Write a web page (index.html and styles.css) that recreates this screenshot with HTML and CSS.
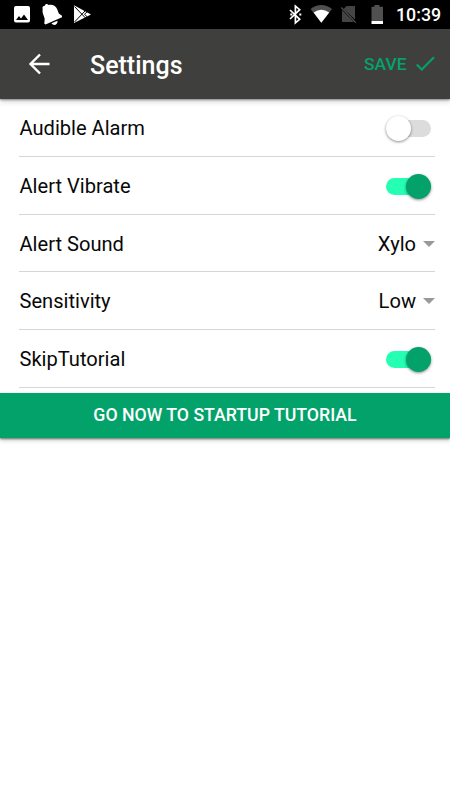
FILE: index.html
```html
<!DOCTYPE html>
<html lang="en">
<head>
<meta charset="utf-8">
<title>Settings</title>
<link rel="stylesheet" href="styles.css">
</head>
<body>
<div class="status">
  <svg width="110" height="29" viewBox="0 0 110 29" fill="#fff">
    <path fill-rule="evenodd" d="M16 6h12a2 2 0 0 1 2 2v12.500a2 2 0 0 1-2 2H16a2 2 0 0 1-2-2V8a2 2 0 0 1 2-2zM16 20h12l-4-5.500-3 4-2-2.500z"/>
    <path d="M42.500 8c0-1.500 1-2.500 2.500-2.200 0-2 2.300-2.500 3.500-.8 4-1 7.500 1 8.800 4.500l1.500 4 3.200 2.200v1.600L45.500 24.500l-1.200-1 .4-4.800-1.800-5.200c-.8-2 .1-4-.4-5.500z"/>
    <path d="M51.500 23.200l6-2.500c.6 4-4 5.800-6 2.500z"/>
    <path d="M74 5.300L91 14.400 74 23z"/>
    <path d="M74.500 6.500l11 11.500M74.500 22l11-11.500M84.500 14.300l2.500-2.400M84.500 14.300l2.500 2.400" stroke="#000" stroke-width="1"/>
  </svg>
  <svg class="system-icons" width="106" height="29" viewBox="284 0 106 29" fill="none">
    <path d="M290 10l9.700 9.300-4.300 3.700V6l4.300 3.700-9.700 9.300" stroke="#fff" stroke-width="1.700"/>
    <path d="M290.300 13.400h2v2h-2zM299.300 13.400h2v2h-2z" fill="#fff"/>
    <path d="M310.500 8.900Q321.300 1.200 332 8.900L321.300 22.700z" fill="#505050"/>
    <path d="M313.600 12.500Q321.300 7 329.200 12.500L321.300 22.700z" fill="#fff"/>
    <path d="M346.500 6H355v13.500L343.500 9zM342 10l12 12H342z" fill="#444"/>
    <path d="M341.300 7.500l14.500 15.200" stroke="#505050" stroke-width="1.200"/>
    <path d="M374.500 5h5v1.800h3.500V20h-11.500V6.800h3z" fill="#505050"/>
    <path d="M371.500 20.700h11.500V24h-11.500z" fill="#fff"/>
  </svg>
  <span class="clock">10:39</span>
</div>
<header class="bar">
  <svg class="back" width="22" height="22" viewBox="0 0 22 22" fill="none" stroke="#fff" stroke-width="2.400"><path d="M21.500 11H3M12 1.500L2.500 11l9.500 9.500"/></svg>
  <h1 class="title">Settings</h1>
  <span class="save">SAVE</span>
  <svg class="check" width="20" height="16" viewBox="0 0 20 16" fill="none" stroke="#04a26b" stroke-width="2"><path d="M1.800 8.500l5 5L19 1.300"/></svg>
</header>
<main class="list">
  <div class="row"><span>Audible Alarm</span><span class="switch"></span></div>
  <div class="row"><span>Alert Vibrate</span><span class="switch on"></span></div>
  <div class="row"><span>Alert Sound</span><span class="select">Xylo<i class="caret"></i></span></div>
  <div class="row"><span>Sensitivity</span><span class="select">Low<i class="caret"></i></span></div>
  <div class="row"><span>SkipTutorial</span><span class="switch on"></span></div>
</main>
<div class="cta">GO NOW TO STARTUP TUTORIAL</div>
</body>
</html>
```
FILE: styles.css
```css
* { box-sizing: border-box; }
body { margin: 0; min-height: 100vh; background: #fff; color: #080808; font-family: Roboto, sans-serif; }
svg { display: block; flex: none; }
.status { display: flex; height: 29px; background: #000; color: #fff; }
.system-icons { margin-left: auto; }
.clock { width: 60px; padding: 1px 0 0 6px; font-size: 17.800px; line-height: 28px; font-weight: 500; }
.bar {
  display: flex;
  align-items: center;
  height: 70px;
  padding: 0 15px 0 27.500px;
  background: #3f403d;
  box-shadow: 0 1px 2px rgba(0, 0, 0, .4), 0 3px 5px rgba(0, 0, 0, .15);
}
.title { flex: 1; margin: 3px 0 0 40.500px; font-size: 25px; line-height: 30px; font-weight: 500; color: #fff; }
.save { color: #04a26b; font-size: 17.400px; line-height: 20px; font-weight: 500; }
.check { margin-left: 8.500px; }
.list { height: 294px; padding: 0 15.500px 0 19px; }
.row {
  display: flex;
  align-items: center;
  justify-content: space-between;
  height: 57.800px;
  padding: 1.200px 0 0 .5px;
  border-bottom: 1px solid #d6d6d6;
  font-size: 20.100px;
  line-height: 24px;
}
.switch { position: relative; width: 45px; height: 17.500px; margin: 1px 3.500px 0 0; border-radius: 9px; background: #dcdcdc; }
.switch::after {
  content: "";
  position: absolute;
  top: -4px;
  left: 0;
  width: 25px;
  height: 25px;
  border-radius: 50%;
  background: #fff;
  box-shadow: 0 1px 3px rgba(0, 0, 0, .45);
}
.switch.on { background: #24ffb3; }
.switch.on::after { left: 20px; background: #04a26b; }
.select { display: flex; align-items: center; }
.caret { margin-left: 6.500px; border: 6px solid transparent; border-top-color: #999; border-bottom: 0; }
.cta {
  height: 45px;
  background: #04a26b;
  color: #fff;
  font-size: 17.700px;
  line-height: 44px;
  font-weight: 500;
  text-align: center;
  box-shadow: 0 1px 2px rgba(0, 0, 0, .5), 0 3px 4px rgba(0, 0, 0, .15);
}
```
